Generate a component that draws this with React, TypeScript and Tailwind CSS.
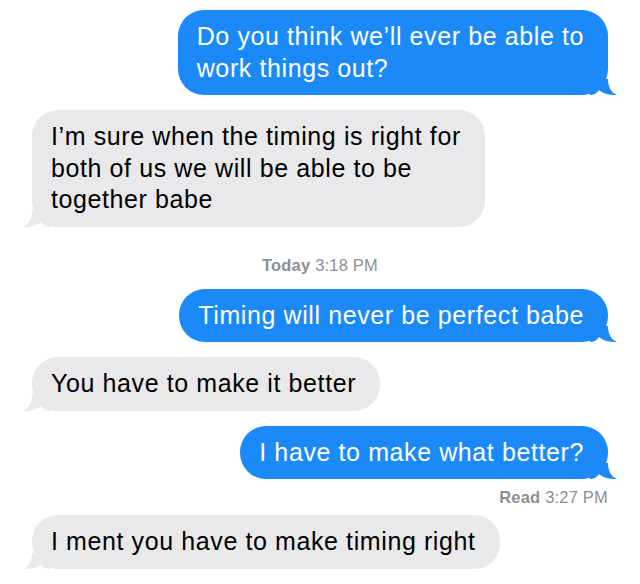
import React from "react";

type Msg =
  | { kind: "out" | "in"; lines: string[] }
  | { kind: "stamp"; label: string; time: string; align: "center" | "right" };

const messages: Msg[] = [
  { kind: "out", lines: ["Do you think we’ll ever be able to", "work things out?"] },
  {
    kind: "in",
    lines: ["I’m sure when the timing is right for", "both of us we will be able to be", "together babe"],
  },
  { kind: "stamp", label: "Today", time: "3:18 PM", align: "center" },
  { kind: "out", lines: ["Timing will never be perfect babe"] },
  { kind: "in", lines: ["You have to make it better"] },
  { kind: "out", lines: ["I have to make what better?"] },
  { kind: "stamp", label: "Read", time: "3:27 PM", align: "right" },
  { kind: "in", lines: ["I ment you have to make timing right"] },
];

const Tail = ({ side, color }: { side: "left" | "right"; color: string }) =>
  side === "right" ? (
    <svg className="absolute -right-[10px] bottom-0" width="28" height="16" viewBox="0 0 28 16">
      <path d="M0 16 C4 16 7 14 9 11 C12 14 18 16 27 16 C22 14 18 9 18 0 L0 0 Z" fill={color} />
    </svg>
  ) : (
    <svg className="absolute -left-[10px] bottom-0" width="28" height="16" viewBox="0 0 28 16">
      <path d="M28 16 C24 16 21 14 19 11 C16 14 10 16 1 16 C6 14 10 9 10 0 L28 0 Z" fill={color} />
    </svg>
  );

const Bubble = ({ kind, lines }: { kind: "out" | "in"; lines: string[] }) => {
  const out = kind === "out";
  return (
    <div className={out ? "flex justify-end" : "flex justify-start"}>
      <div
        className={
          "relative rounded-[26px] py-[11px] pl-[19px] pr-[24px] text-[25px] leading-[31.5px] tracking-[0.6px] whitespace-nowrap " +
          (out ? "bg-[#1b8af8] text-white" : "bg-[#e9e9eb] text-black")
        }
      >
        {lines.map((l, i) => (
          <div key={i}>{l}</div>
        ))}
        <Tail side={out ? "right" : "left"} color={out ? "#1b8af8" : "#e9e9eb"} />
      </div>
    </div>
  );
};

export default function App() {
  return (
    <div className="w-[640px] h-[584px] overflow-hidden bg-white px-[32px] pt-[10px] font-['Liberation_Sans',Arial,sans-serif]">
      <div className="flex flex-col">
        {messages.map((m, i) => {
          if (m.kind === "stamp") {
            return (
              <div
                key={i}
                className={
                  "text-[16.5px] leading-[20px] tracking-[0.2px] text-[#8e8e93] " +
                  (m.align === "center" ? "text-center mt-[28px] mb-[14px]" : "text-right mt-[8px] mb-[8px]")
                }
              >
                <span className="font-bold">{m.label}</span> {m.time}
              </div>
            );
          }
          const prev = messages[i - 1];
          const mt = i === 0 || (prev && prev.kind === "stamp") ? "" : "mt-[15px]";
          return (
            <div key={i} className={mt}>
              <Bubble kind={m.kind} lines={m.lines} />
            </div>
          );
        })}
      </div>
    </div>
  );
}
